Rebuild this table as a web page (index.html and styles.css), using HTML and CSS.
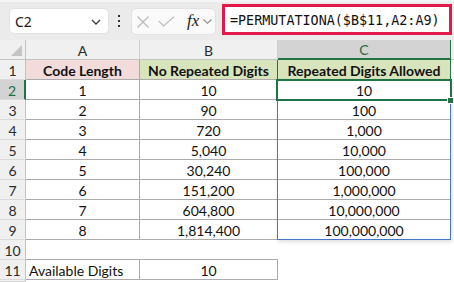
FILE: index.html
```html
<!DOCTYPE html>
<html>
<head>
<meta charset="utf-8">
<link rel="stylesheet" href="styles.css">
</head>
<body>
<div class="toolbar">
  <div class="namebox">
    <span class="nb-text">C2</span>
    <svg class="nb-chev" width="10" height="6" viewBox="0 0 10 6"><path d="M1 1 L5 5 L9 1" fill="none" stroke="#3a3a3a" stroke-width="1.3"/></svg>
  </div>
  <div class="dots"><i></i><i></i><i></i></div>
  <div class="fbtns">
    <svg class="ico-x" width="12" height="12" viewBox="0 0 12 12"><path d="M0.5 0.5 L11.5 11.5 M11.5 0.5 L0.5 11.5" stroke="#b9b9b9" stroke-width="1.2" fill="none"/></svg>
    <svg class="ico-ok" width="17" height="11" viewBox="0 0 17 11"><path d="M0.8 5.2 L5.6 10 L16.2 0.6" stroke="#b9b9b9" stroke-width="1.2" fill="none"/></svg>
    <span class="fx">fx</span>
    <svg class="ico-chev" width="9" height="5" viewBox="0 0 9 5"><path d="M0.5 0.5 L4.5 4.3 L8.5 0.5" fill="none" stroke="#8a8a8a" stroke-width="1.1"/></svg>
  </div>
  <div class="formula">=PERMUTATIONA($B$11,A2:A9)</div>
</div>
<div class="sheet">
  <div class="grid">
    <div class="corner"><svg width="25" height="19" viewBox="0 0 25 19"><polygon points="22,5 22,16 11,16" fill="#c4c4c4"/></svg></div>
    <div class="ch">A</div>
    <div class="ch">B</div>
    <div class="ch sel">C</div>
    <div class="ch dcol"></div>

    <div class="rh">1</div>
    <div class="c hp b">Code Length</div>
    <div class="c hg b gr">No Repeated Digits</div>
    <div class="c hg b gr">Repeated Digits Allowed</div>
    <div class="e"></div>

    <div class="rh sel">2</div>
    <div class="c">1</div>
    <div class="c">10</div>
    <div class="c">10</div>
    <div class="e"></div>

    <div class="rh">3</div>
    <div class="c">2</div>
    <div class="c">90</div>
    <div class="c">100</div>
    <div class="e"></div>

    <div class="rh">4</div>
    <div class="c">3</div>
    <div class="c">720</div>
    <div class="c">1,000</div>
    <div class="e"></div>

    <div class="rh">5</div>
    <div class="c">4</div>
    <div class="c">5,040</div>
    <div class="c">10,000</div>
    <div class="e"></div>

    <div class="rh">6</div>
    <div class="c">5</div>
    <div class="c">30,240</div>
    <div class="c">100,000</div>
    <div class="e"></div>

    <div class="rh">7</div>
    <div class="c">6</div>
    <div class="c">151,200</div>
    <div class="c">1,000,000</div>
    <div class="e"></div>

    <div class="rh">8</div>
    <div class="c">7</div>
    <div class="c">604,800</div>
    <div class="c">10,000,000</div>
    <div class="e"></div>

    <div class="rh">9</div>
    <div class="c">8</div>
    <div class="c">1,814,400</div>
    <div class="c">100,000,000</div>
    <div class="e"></div>

    <div class="rh">10</div>
    <div class="e bb"></div>
    <div class="e bb"></div>
    <div class="e"></div>
    <div class="e"></div>

    <div class="rh">11</div>
    <div class="c left">Available Digits</div>
    <div class="c">10</div>
    <div class="e"></div>
    <div class="e"></div>

    <div class="rh"></div>
    <div class="e"></div>
    <div class="e"></div>
    <div class="e"></div>
    <div class="e"></div>
  </div>
  <div class="spill"></div>
  <div class="active"></div>
  <div class="handle"></div>
</div>
</body>
</html>
```
FILE: styles.css
```css
html, body {
  margin: 0;
  padding: 0;
  width: 454px;
  height: 282px;
  overflow: hidden;
  background: #ffffff;
}

.toolbar {
  height: 40px;
  box-sizing: border-box;
  background: #ebebeb;
  border-top: 2px solid #f5f5f5;
  display: flex;
  align-items: flex-start;
}

.namebox {
  margin-left: 9px;
  margin-top: 6px;
  width: 100px;
  height: 26px;
  box-sizing: border-box;
  background: #ffffff;
  border: 1px solid #e2e2e2;
  border-radius: 5px;
  display: flex;
  align-items: center;
  justify-content: space-between;
  padding: 0 7px 0 5px;
  font-family: "Noto Sans", sans-serif;
  font-size: 14px;
  color: #1a1a1a;
}

.nb-chev { margin-top: 1px; }

.dots {
  margin-left: 9px;
  margin-top: 13px;
  width: 2px;
  display: flex;
  flex-direction: column;
  gap: 3px;
}
.dots i {
  display: block;
  width: 2px;
  height: 2px;
  background: #333333;
}

.fbtns {
  margin-left: 11px;
  margin-top: 6px;
  width: 85px;
  height: 27px;
  box-sizing: border-box;
  background: #fafafa;
  border: 1px solid #e2e2e2;
  border-radius: 5px;
  display: flex;
  align-items: center;
  padding-left: 5px;
}
.ico-ok { margin-left: 9px; }
.fx {
  margin-left: 12px;
  font-family: "Liberation Serif", serif;
  font-style: italic;
  font-size: 17px;
  color: #1e1e1e;
  line-height: 1;
  margin-top: -2px;
}
.ico-chev { margin-left: 4px; }

.formula {
  margin-left: 6px;
  margin-top: 2px;
  width: 230px;
  height: 31px;
  box-sizing: border-box;
  background: #ffffff;
  border: 3px solid #e3194b;
  padding: 6px 0 0 5px;
  font-family: "DejaVu Sans Mono", monospace;
  font-size: 13.4px;
  line-height: 16px;
  color: #111111;
  white-space: nowrap;
  overflow: hidden;
}

.sheet {
  position: relative;
  height: 242px;
  overflow: hidden;
}

.grid {
  display: grid;
  grid-template-columns: 26px 114px 138px 173px 10px;
  grid-template-rows: repeat(12, 20px) 2px;
  font-family: "Lato", sans-serif;
  font-size: 14px;
  color: #111111;
}

.grid > div {
  box-sizing: border-box;
  display: flex;
  align-items: center;
  justify-content: center;
  white-space: nowrap;
  overflow: hidden;
  padding-top: 1px;
}

.corner {
  background: #f0f0f0;
  border-right: 1px solid #c3c3c3;
  border-bottom: 1px solid #c3c3c3;
  padding: 0 !important;
}

.ch {
  background: #f0f0f0;
  border-right: 1px solid #cfcfcf;
  border-bottom: 1px solid #c3c3c3;
  color: #2b2b2b;
}
.ch.sel {
  background: #d3d3d3;
  color: #1d6b40;
  border-bottom: 2px solid #217346;
  border-right: 1px solid #217346;
}
.ch.dcol {
  border-right: none;
}

.rh {
  background: #f0f0f0;
  border-right: 1px solid #c3c3c3;
  border-bottom: 1px solid #dadada;
  color: #2b2b2b;
}
.rh.sel {
  background: #d3d3d3;
  color: #1d6b40;
  border-right: 2px solid #217346;
}

.c {
  background: #ffffff;
  border-right: 1px solid #ababab;
  border-bottom: 1px solid #ababab;
}
.c.left {
  justify-content: flex-start !important;
  padding-left: 3px;
}
.b { font-weight: 700; }
.hp { background: #f2dcdb; }
.hg { background: #d8e4bc; }
.c.gr { border-right-color: #217346; }

.e { background: #ffffff; }
.e.bb { border-bottom: 1px solid #ababab; }

.spill {
  position: absolute;
  left: 277px;
  top: 39px;
  width: 174px;
  height: 161px;
  box-sizing: border-box;
  border: 1px solid #4773c8;
  box-shadow: 1px 2px 4px rgba(0, 0, 0, 0.13);
}

.active {
  position: absolute;
  left: 276px;
  top: 39px;
  width: 176px;
  height: 22px;
  box-sizing: border-box;
  border: 2px solid #217346;
}

.handle {
  position: absolute;
  left: 447px;
  top: 57px;
  width: 7px;
  height: 7px;
  box-sizing: border-box;
  background: #217346;
  border: 1px solid #ffffff;
}
```
